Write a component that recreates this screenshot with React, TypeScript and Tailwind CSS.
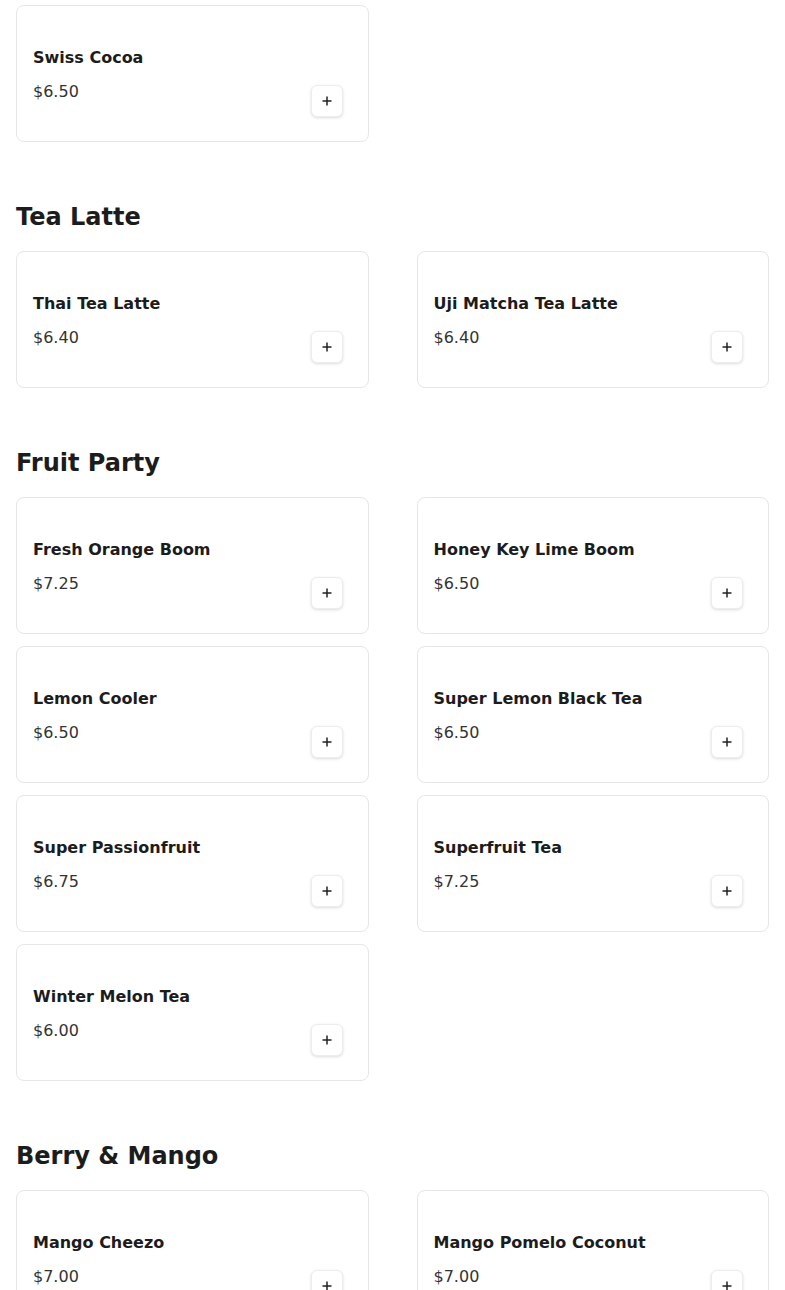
import React from "react";

type Item = { name: string; price: string };

const sections: { title: string; items: Item[] }[] = [
  {
    title: "Tea Latte",
    items: [
      { name: "Thai Tea Latte", price: "$6.40" },
      { name: "Uji Matcha Tea Latte", price: "$6.40" },
    ],
  },
  {
    title: "Fruit Party",
    items: [
      { name: "Fresh Orange Boom", price: "$7.25" },
      { name: "Honey Key Lime Boom", price: "$6.50" },
      { name: "Lemon Cooler", price: "$6.50" },
      { name: "Super Lemon Black Tea", price: "$6.50" },
      { name: "Super Passionfruit", price: "$6.75" },
      { name: "Superfruit Tea", price: "$7.25" },
      { name: "Winter Melon Tea", price: "$6.00" },
    ],
  },
  {
    title: "Berry & Mango",
    items: [
      { name: "Mango Cheezo", price: "$7.00" },
      { name: "Mango Pomelo Coconut", price: "$7.00" },
    ],
  },
];

const PlusIcon = () => (
  <svg width="10" height="10" viewBox="0 0 10 10" fill="none">
    <path d="M5 0.5v9M0.5 5h9" stroke="#222" strokeWidth="1.5" />
  </svg>
);

const MenuCard = ({ item }: { item: Item }) => (
  <div className="flex h-[137px] rounded-lg border border-[#e6e6e6] bg-white pt-10 pb-6 pl-4 pr-[25px]">
    <div className="flex-1 self-start">
      <div className="text-base font-bold leading-6 text-[#1c1c1c]">{item.name}</div>
      <div className="mt-2.5 text-base leading-6 text-[#333]">{item.price}</div>
    </div>
    <button
      type="button"
      aria-label={`Add ${item.name}`}
      className="flex size-8 items-center justify-center self-end rounded-md border border-[#ededed] bg-white shadow-[0_1px_3px_rgba(0,0,0,0.14)]"
    >
      <PlusIcon />
    </button>
  </div>
);

export default function App() {
  return (
    <div className="min-h-screen bg-white px-4 pt-[5px] pb-10 font-['DejaVu_Sans',sans-serif]">
      <div className="grid grid-cols-2 gap-x-12 gap-y-3">
        <MenuCard item={{ name: "Swiss Cocoa", price: "$6.50" }} />
      </div>

      {sections.map((section) => (
        <section key={section.title} className="mt-[59px]">
          <h2 className="mb-[18px] text-2xl font-bold leading-8 text-[#1c1c1c]">
            {section.title}
          </h2>
          <div className="grid grid-cols-2 gap-x-12 gap-y-3">
            {section.items.map((item) => (
              <MenuCard key={item.name} item={item} />
            ))}
          </div>
        </section>
      ))}
    </div>
  );
}
